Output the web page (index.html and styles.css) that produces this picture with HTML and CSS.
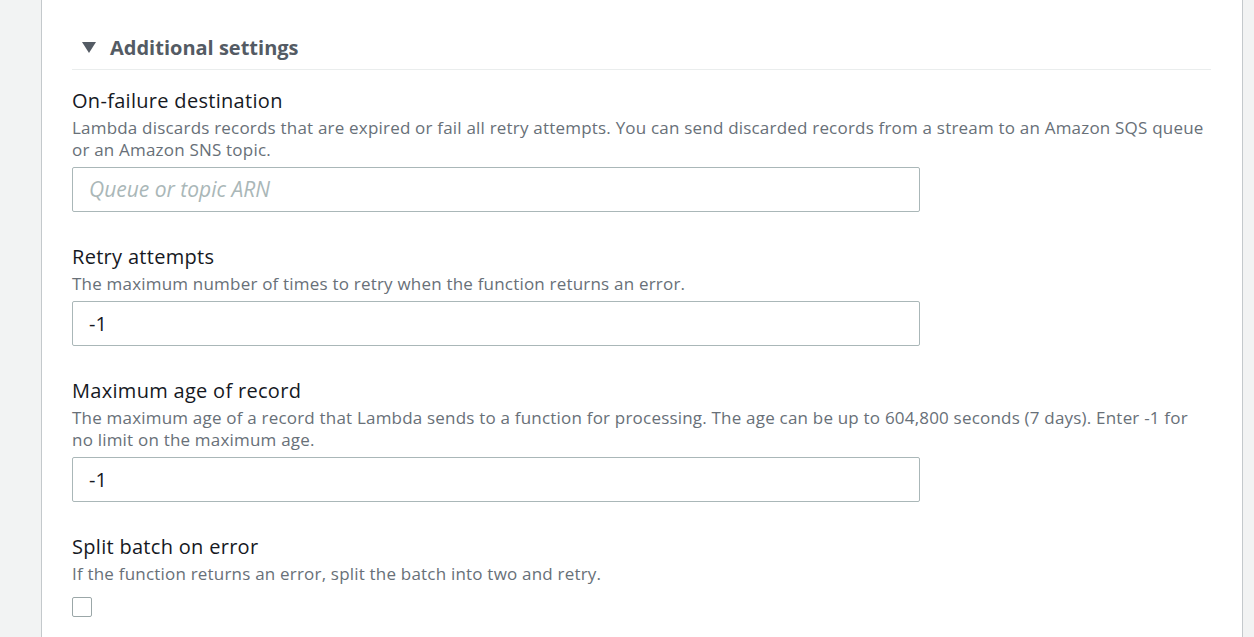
FILE: index.html
```html
<!DOCTYPE html>
<html>
<head>
<meta charset="utf-8">
<link rel="stylesheet" href="styles.css">
</head>
<body>
<div class="page">
  <div class="card">
    <div class="section-head">
      <svg class="caret" width="14" height="12" viewBox="0 0 14 12"><path d="M0 0 H14 L7 11 Z" fill="#545b64"/></svg>
      <span class="section-title">Additional settings</span>
    </div>
    <div class="fields">
      <div class="field">
        <div class="label">On-failure destination</div>
        <div class="desc">Lambda discards records that are expired or fail all retry attempts. You can send discarded records from a stream to an Amazon SQS queue or an Amazon SNS topic.</div>
        <input class="input" type="text" placeholder="Queue or topic ARN">
      </div>
      <div class="field">
        <div class="label">Retry attempts</div>
        <div class="desc">The maximum number of times to retry when the function returns an error.</div>
        <input class="input" type="text" value="-1">
      </div>
      <div class="field">
        <div class="label">Maximum age of record</div>
        <div class="desc">The maximum age of a record that Lambda sends to a function for processing. The age can be up to 604,800 seconds (7 days). Enter -1 for no limit on the maximum age.</div>
        <input class="input" type="text" value="-1">
      </div>
      <div class="field">
        <div class="label">Split batch on error</div>
        <div class="desc">If the function returns an error, split the batch into two and retry.</div>
        <span class="checkbox"></span>
      </div>
    </div>
  </div>
</div>
</body>
</html>
```

FILE: styles.css
```css
html, body {
  margin: 0;
  padding: 0;
  background: #f2f3f3;
  height: 100%;
  overflow: hidden;
}
.page {
  height: 637px;
  padding-left: 41px;
}
.card {
  width: 1202px;
  height: 637px;
  background: #fff;
  border-left: 1px solid #c4c9cc;
  border-right: 1px solid #c4c9cc;
  padding: 0 31px 0 30px;
  box-sizing: border-box;
  font-family: "Open Sans", sans-serif;
}
.section-head {
  display: flex;
  align-items: flex-start;
  height: 70px;
  padding: 35px 0 0 10px;
  box-sizing: border-box;
  border-bottom: 1px solid #eaeded;
}
.caret {
  margin-top: 7px;
  margin-right: 14px;
}
.section-title {
  font-size: 20px;
  font-weight: 700;
  color: #545b64;
  line-height: 26px;
}
.fields {
  display: flex;
  flex-direction: column;
  gap: 32px;
  padding-top: 18px;
}
.field {
  display: flex;
  flex-direction: column;
  align-items: flex-start;
}
.label {
  font-size: 20px;
  letter-spacing: 0.3px;
  line-height: 26px;
  color: #16191f;
}
.desc {
  font-size: 17px;
  letter-spacing: 0.2px;
  line-height: 22px;
  color: #687078;
  margin-top: 3px;
}
.input {
  margin-top: 6px;
  width: 848px;
  height: 45px;
  box-sizing: border-box;
  border: 1px solid #aab7b8;
  border-radius: 2px;
  padding: 0 16px;
  font-family: "Open Sans", sans-serif;
  font-size: 20px;
  color: #16191f;
  outline: none;
}
.input::placeholder {
  color: #aab7b8;
  font-style: italic;
  font-size: 21px;
}
.checkbox {
  margin-top: 12px;
  width: 20px;
  height: 20px;
  box-sizing: border-box;
  border: 1px solid #9ba7a8;
  border-radius: 2px;
}
```
